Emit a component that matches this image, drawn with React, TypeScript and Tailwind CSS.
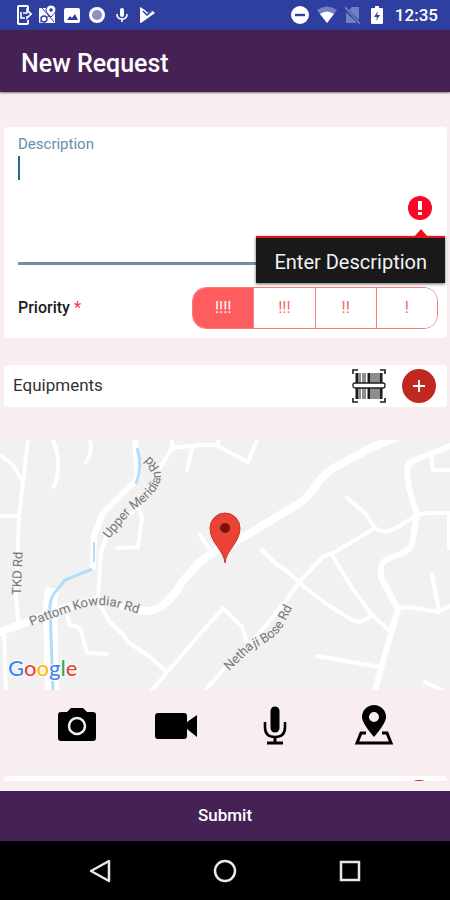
import { useState } from "react";
import type { ReactNode } from "react";

const PRIORITIES = [
  { mark: "!!!!", label: "Critical" },
  { mark: "!!!", label: "High" },
  { mark: "!!", label: "Medium" },
  { mark: "!", label: "Low" },
];

const MINOR_ROADS = [
  "M28 0L23 42L19 76L18 105L16 155L18 182",
  "M0 15L13 25L23 42",
  "M0 76H19",
  "M53 0Q63 24 54 47",
  "M90 0Q93 12 86 22",
  "M172 0V8L160 28L140 65L107 95L101 112L98 158",
  "M172 8L200 5H217L225 10L248 22L257 0",
  "M192 8L187 30",
  "M218 0V6",
  "M138 65L142 78L138 107L117 108",
  "M4 192L6 250",
  "M200 95L210 110",
  "M100 165L110 182L123 195L128 202L150 217L167 232",
  "M152 250L167 232L223 168L242 187L246 200",
  "M67 175L70 185L80 188L87 213L107 214",
  "M205 250L225 228L252 202L288 158L299 142L322 118Q328 114 335 112L375 88Q384 95 396 88L417 75L428 73H450",
  "M262 110L275 123L288 132L308 150L328 165L352 180Q362 185 371 175",
  "M332 115L352 148L372 175L390 191",
  "M347 58L365 73L375 88",
  "M431 15L433 30H450",
  "M398 169Q404 166 415 168L438 172L450 166",
  "M432 135L439 170",
  "M317 216L380 227",
  "M425 242L442 250",
  "M449 75V108",
];

const MAJOR_ROADS = [
  "M135 0L138 36Q136 42 128 48L103 73L94 95L93 127",
  "M450 6L415 20Q406 24 407 32L409 48L417 75L412 103Q411 110 400 114L388 119Q381 122 381 128V138L398 169L375 250",
];

function PhoneLockIcon() {
  return (
    <svg className="h-5 w-4" viewBox="0 0 16 20" fill="none" stroke="currentColor" strokeWidth="2">
      <path d="M12 5V2Q12 1 11 1H3Q2 1 2 2V18Q2 19 3 19H11Q12 19 12 18V15" />
      <path d="M5 7V13H9M7 8H11V5L15 9L11 13V11" strokeWidth="1.6" />
    </svg>
  );
}

function MapStatusIcon() {
  return (
    <svg className="h-5 w-5" viewBox="0 0 20 20">
      <path d="M3 3H18V18H3Q2 18 2 17V4Q2 3 3 3Z" fill="currentColor" />
      <path d="M3 17L15 9M5 3L17 17" stroke="#2f3f9f" strokeWidth="1" />
      <circle cx="7" cy="14" r="3" fill="white" stroke="#2f3f9f" strokeWidth="1.4" />
      <path d="M14 12Q9 7 9 5A5 5 0 0 1 19 5Q19 7 14 12Z" fill="white" stroke="#2f3f9f" />
      <circle cx="14" cy="5" r="1.8" fill="#2f3f9f" />
    </svg>
  );
}

function StatusBar() {
  return (
    <div className="flex h-[30px] items-center justify-between bg-[#2f3f9f] pr-3 pl-4 text-white">
      <div className="flex items-center gap-[5px]">
        <PhoneLockIcon />
        <MapStatusIcon />
        <svg className="h-5 w-5" viewBox="0 0 20 20">
          <rect x="2" y="3" width="16" height="15" rx="2" fill="currentColor" />
          <path d="M5 15L8 11L10 13L13 9L16 15Z" fill="#2f3f9f" />
        </svg>
        <svg className="h-5 w-5" viewBox="0 0 20 20">
          <circle cx="10" cy="10" r="8" fill="white" />
          <circle cx="10" cy="10" r="5" fill="#8791c8" />
        </svg>
        <svg className="h-5 w-5" viewBox="0 0 20 20" fill="none" stroke="white">
          <path d="M10 5V10" strokeWidth="4" strokeLinecap="round" />
          <path d="M5 9Q5 14 10 14T15 9M10 14V17" strokeWidth="1.6" />
        </svg>
        <svg className="h-5 w-5" viewBox="0 0 20 20">
          <path d="M3 2L8 5L11 8L15 5L18 8L4 18Q3 18 3 17Z" fill="white" />
          <path d="M6 6L10 10L16 5" fill="none" stroke="#2f3f9f" strokeWidth="1.4" />
        </svg>
      </div>
      <div className="flex items-center gap-2">
        <svg className="h-[18px] w-[18px]" viewBox="0 0 18 18">
          <circle cx="9" cy="9" r="9" fill="white" />
          <path d="M4 9H14" stroke="#2f3f9f" strokeWidth="2.4" />
        </svg>
        <svg className="h-5 w-5" viewBox="0 0 20 20">
          <path d="M10 18L0 5Q10 -2 20 5Z" fill="#7580c2" />
          <path d="M10 18L3 9Q10 4 17 9Z" fill="white" />
        </svg>
        <svg className="h-5 w-4" viewBox="0 0 16 20">
          <path d="M14 2V15L4 5L7 2ZM1 7L12 18H1Z" fill="#7580c2" />
          <path d="M0 2L15 19" stroke="#7580c2" strokeWidth="1.6" />
        </svg>
        <svg className="mr-1 ml-0.5 h-5 w-3" viewBox="0 0 12 20">
          <path d="M4 1H8V3H11Q12 3 12 4V18Q12 19 11 19H1Q0 19 0 18V4Q0 3 1 3H4Z" fill="white" />
          <path d="M7 6L3 12H6L5 16L9 10H6Z" fill="#2f3f9f" />
        </svg>
        <span className="text-[17px] leading-5 font-medium">12:35</span>
      </div>
    </div>
  );
}

function DescriptionField() {
  return (
    <div className="relative flex flex-col pt-2">
      <label htmlFor="description" className="text-[15px] leading-[18px] text-[#5f8fad]">
        Description
      </label>
      <div className="flex border-b-[3px] border-[#6f8fab] pt-0.5">
        <span className="mt-px h-6 w-0.5 bg-[#2c6a90]" />
        <textarea
          id="description"
          aria-describedby="description-error"
          className="h-[107px] flex-1 resize-none bg-transparent px-1 text-lg outline-none"
        />
      </div>
      <svg className="absolute top-[69px] right-[6px] h-6 w-6" viewBox="0 0 24 24">
        <circle cx="12" cy="12" r="12" fill="#fb0528" />
        <path d="M12 5V14M12 16V19" stroke="white" strokeWidth="4" />
      </svg>
      <div
        id="description-error"
        role="alert"
        className="absolute top-[109px] -right-[7px] border-t-2 border-[#e8101c] bg-[#191919] px-[18px] pt-3 pb-[9px] text-xl leading-6 text-[#f2f2f2] shadow-[0_1px_3px_rgba(0,0,0,0.6)]"
      >
        <svg className="absolute -top-[9px] right-[17px] h-2 w-[14px]" viewBox="0 0 14 8">
          <path d="M7 0L14 8H0Z" fill="#e8101c" />
        </svg>
        Enter Description
      </div>
    </div>
  );
}

function PriorityPicker() {
  const [selected, setSelected] = useState("!!!!");

  return (
    <div className="flex items-center justify-between pt-[22px]">
      <span id="priority-label" className="text-base font-medium text-[#1c1c1c]">
        Priority <span className="text-[#fb3c4c]">*</span>
      </span>
      <div
        role="group"
        aria-labelledby="priority-label"
        className="flex h-[42px] w-[246px] divide-x divide-[#f97d7d] overflow-hidden rounded-[14px] border border-[#f97d7d]"
      >
        {PRIORITIES.map(({ mark, label }) => (
          <button
            key={mark}
            type="button"
            aria-label={label}
            aria-pressed={selected === mark}
            onClick={() => setSelected(mark)}
            className={
              selected === mark
                ? "flex-1 bg-[#ff5c5f] text-base text-white"
                : "flex-1 bg-white text-base text-[#f0676c]"
            }
          >
            {mark}
          </button>
        ))}
      </div>
    </div>
  );
}

function BarcodeIcon() {
  return (
    <svg className="h-[34px] w-[34px]" viewBox="0 0 34 34" fill="none" stroke="#1c1c1c">
      <path d="M1 5V1H6M28 1H33V5M1 29V33H6M28 33H33V29" strokeWidth="1.6" />
      <path d="M5 4V30M17 4V30M29 4V30" strokeWidth="3" />
      <path d="M8 4V30M11 4V30M13 4V30M20 4V30M22 4V30M24 4V30M26 4V30" strokeWidth="1" />
      <rect x="1" y="14" width="32" height="5" rx="2" fill="white" strokeWidth="1.3" />
    </svg>
  );
}

function LocationMap() {
  return (
    <svg
      className="h-[250px] w-full bg-[#f1f1f1]"
      viewBox="0 0 450 250"
      preserveAspectRatio="xMidYMid slice"
      role="img"
      aria-label="Map of the request location"
    >
      <defs>
        <path id="upper-meridian" d="M109 99L132 71Q145 63 154 52Q166 37 157 24L142 8" />
        <path id="pattom-kowdiar" d="M31 186Q60 175 82 168Q98 163 115 167L143 175" />
        <path id="nethaji-bose" d="M229 231L252 209Q275 200 283 186L297 158" />
      </defs>
      <g fill="none" stroke="white" strokeLinecap="round" strokeLinejoin="round">
        {MINOR_ROADS.map((d) => (
          <path key={d} d={d} strokeWidth="4" />
        ))}
        {MAJOR_ROADS.map((d) => (
          <path key={d} d={d} strokeWidth="6" />
        ))}
        <path d="M52 148L50 165L52 250" strokeWidth="14" strokeLinecap="butt" />
        <path
          d="M0 192L27 182L70 166L98 160L137 170Q152 173 162 166Q174 157 182 142L200 122L217 110L242 98L298 64Q310 56 317 44Q322 36 334 28L372 7L398 -3"
          strokeWidth="8"
        />
      </g>
      <g fill="none" stroke="#b4dcf8" strokeWidth="3">
        <path d="M137 8Q143 26 136 44" />
        <path d="M94 102V122" strokeWidth="2" />
        <path d="M92 129L65 140L57 150Q49 158 50 170L51 195L53 250" />
      </g>
      <g fill="#777777" stroke="#f1f1f1" strokeWidth="2" paintOrder="stroke" className="text-[13px]">
        <text transform="translate(21 155) rotate(-88)">TKD Rd</text>
        <text>
          <textPath href="#upper-meridian">Upper Meridian Rd</textPath>
        </text>
        <text>
          <textPath href="#pattom-kowdiar">Pattom Kowdiar Rd</textPath>
        </text>
        <text>
          <textPath href="#nethaji-bose">Nethaji Bose Rd</textPath>
        </text>
      </g>
      <path
        d="M225 123C224 110 210 103 210 88A15 15 0 0 1 240 88C240 103 226 110 225 123Z"
        fill="#ea4335"
        stroke="#c5362b"
        strokeWidth="1"
      />
      <circle cx="225" cy="88" r="5" fill="#7d120c" />
      <text x="8" y="236" stroke="white" strokeWidth="2" paintOrder="stroke" className="font-[Lato,sans-serif] text-[22px] font-medium">
        <tspan fill="#4285f4">G</tspan>
        <tspan fill="#ea4335">o</tspan>
        <tspan fill="#fbbc05">o</tspan>
        <tspan fill="#4285f4">g</tspan>
        <tspan fill="#34a853">l</tspan>
        <tspan fill="#ea4335">e</tspan>
      </text>
    </svg>
  );
}

function AttachmentButton({ label, children }: { label: string; children: ReactNode }) {
  return (
    <button type="button" aria-label={label} className="flex h-11 w-11 items-center justify-center">
      {children}
    </button>
  );
}

function AttachmentBar() {
  return (
    <div className="flex justify-around px-[27px] pt-[13px] pb-[29px]">
      <AttachmentButton label="Take a photo">
        <svg className="h-10 w-10" viewBox="0 0 40 40">
          <path d="M14 3H26L30 7H36Q39 7 39 10V33Q39 36 36 36H4Q1 36 1 33V10Q1 7 4 7H10Z" />
          <circle cx="20" cy="21" r="8" fill="none" stroke="#f8eeef" strokeWidth="2.5" />
        </svg>
      </AttachmentButton>
      <AttachmentButton label="Record a video">
        <svg className="h-11 w-11" viewBox="0 0 44 44">
          <path d="M4 10H30Q33 10 33 13V19L43 12V34L33 26V33Q33 36 30 36H4Q1 36 1 33V13Q1 10 4 10Z" />
        </svg>
      </AttachmentButton>
      <AttachmentButton label="Record audio">
        <svg className="h-10 w-6" viewBox="0 0 24 40" fill="none" stroke="black">
          <path d="M12 6V23" strokeWidth="9" strokeLinecap="round" />
          <path d="M2 17V22Q2 32 12 32T22 22V17" strokeWidth="2.6" />
          <path d="M12 32V38M4 38H20" strokeWidth="3" />
        </svg>
      </AttachmentButton>
      <AttachmentButton label="Add location">
        <svg className="h-10 w-10" viewBox="0 0 40 40">
          <path
            fillRule="evenodd"
            d="M20 32Q8 18 8 12A12 12 0 0 1 32 12Q32 18 20 32ZM20 7A5 5 0 1 0 20 17A5 5 0 1 0 20 7Z"
          />
          <path d="M12 28H7L3 38H37L33 28H28" fill="none" stroke="black" strokeWidth="3" />
        </svg>
      </AttachmentButton>
    </div>
  );
}

function NavigationBar() {
  return (
    <nav className="flex h-[59px] items-center justify-center gap-[101px] bg-black text-[#e8e8e8]">
      <button type="button" aria-label="Back">
        <svg className="h-6 w-6" viewBox="0 0 24 24" fill="none" stroke="currentColor" strokeWidth="2.5">
          <path d="M21 2V22L3 12Z" strokeLinejoin="round" />
        </svg>
      </button>
      <button type="button" aria-label="Home">
        <svg className="h-6 w-6" viewBox="0 0 24 24" fill="none" stroke="currentColor" strokeWidth="2.5">
          <circle cx="12" cy="12" r="10" />
        </svg>
      </button>
      <button type="button" aria-label="Recent apps">
        <svg className="h-6 w-6" viewBox="0 0 24 24" fill="none" stroke="currentColor" strokeWidth="2.5">
          <rect x="3" y="3" width="18" height="18" />
        </svg>
      </button>
    </nav>
  );
}

export default function App() {
  return (
    <div className="flex min-h-screen flex-col bg-[#f8eeef] font-[Roboto,sans-serif]">
      <StatusBar />
      <header className="flex h-[62px] items-center bg-[#462156] px-[21px] pt-[6px] shadow-[0_1px_2px_rgba(0,0,0,0.5)]">
        <h1 className="text-[25px] leading-8 font-medium text-white">New Request</h1>
      </header>

      <main className="flex flex-1 flex-col pt-[35px]">
        <section className="mr-[3px] ml-1 rounded bg-white pr-[9px] pb-[9px] pl-[14px]">
          <DescriptionField />
          <PriorityPicker />
        </section>

        <section className="mt-[27px] mr-[3px] ml-1 flex h-[42px] items-center rounded bg-white pr-[11px] pl-[9px]">
          <h2 className="flex-1 text-[17px] text-[#333333]">Equipments</h2>
          <button type="button" aria-label="Scan barcode">
            <BarcodeIcon />
          </button>
          <button type="button" aria-label="Add equipment" className="ml-4">
            <svg className="h-[34px] w-[34px]" viewBox="0 0 34 34">
              <circle cx="17" cy="17" r="17" fill="#c0291f" />
              <path d="M17 11V23M11 17H23" stroke="white" strokeWidth="2" />
            </svg>
          </button>
        </section>

        <div className="mt-[33px]">
          <LocationMap />
        </div>
        <AttachmentBar />

        {/* top edge of the next card, cut off by the submit bar */}
        <div className="mr-[3px] ml-1 flex h-[5px] justify-end overflow-hidden rounded-t bg-white pt-1 pr-[11px]">
          <span className="h-[34px] w-[34px] shrink-0 rounded-full bg-[#c0291f]" />
        </div>
      </main>

      <button type="button" className="h-[50px] bg-[#462156] text-[17px] font-medium text-white">
        Submit
      </button>
      <NavigationBar />
    </div>
  );
}
